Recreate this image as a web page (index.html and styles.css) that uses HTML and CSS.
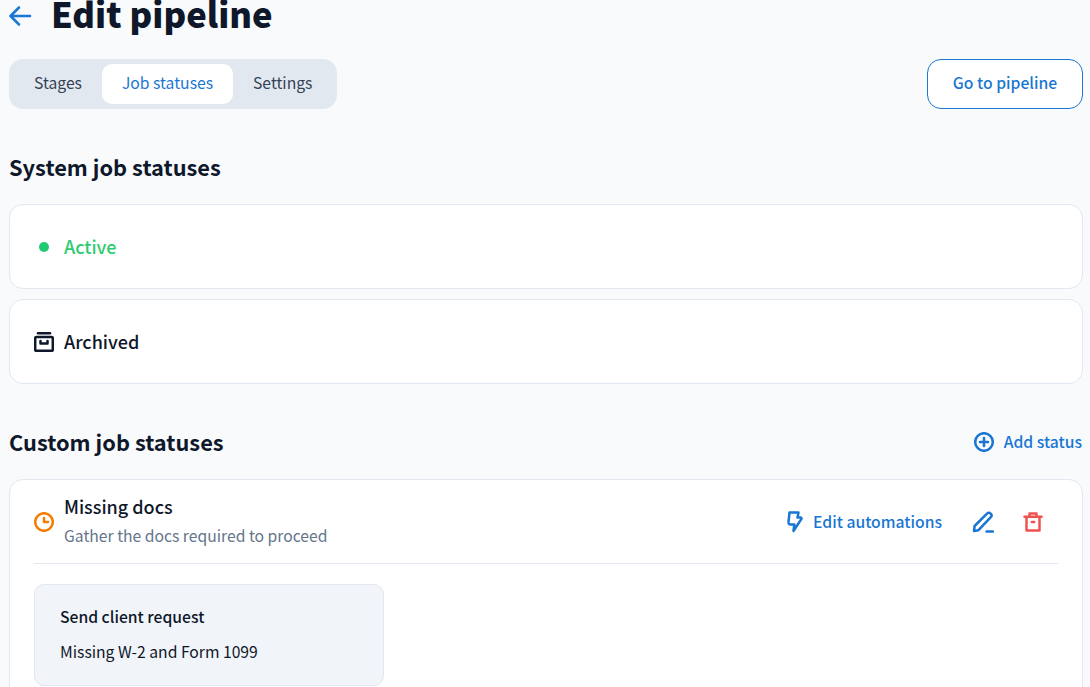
FILE: index.html
```html
<!DOCTYPE html>
<html lang="en">
<head>
    <meta charset="UTF-8">
    <title>Edit pipeline</title>
    <link rel="stylesheet" href="styles.css">
</head>
<body>
    <div class="page">
        <div class="title-row">
            <svg class="back-icon" width="24" height="24" viewBox="0 0 24 24" fill="none" stroke="#1976d2" stroke-width="2.500" stroke-linecap="round" stroke-linejoin="round"><path d="M22 14H3M11 5.500L2.500 14l8.500 8.500" transform="translate(0 -2)"/></svg>
            <h1>Edit pipeline</h1>
        </div>

        <div class="toolbar">
            <div class="tabs">
                <a class="tab">Stages</a>
                <a class="tab active">Job statuses</a>
                <a class="tab">Settings</a>
            </div>
            <a class="btn-outline">Go to pipeline</a>
        </div>

        <h2 class="system-title">System job statuses</h2>

        <div class="card status-row">
            <span class="icon-box"><span class="dot"></span></span>
            <span class="status-name active-name">Active</span>
        </div>
        <div class="card status-row second">
            <span class="icon-box">
                <svg width="20" height="20" viewBox="0 0 20 20" fill="none" stroke="#0f172a" stroke-width="2.500" stroke-linecap="round" stroke-linejoin="round"><path d="M4 1.300h12"/><rect x="1.200" y="5" width="17.600" height="13.800" rx="1"/><path d="M6.500 9v2.500h7V9"/></svg>
            </span>
            <span class="status-name">Archived</span>
        </div>

        <div class="section-head">
            <h2>Custom job statuses</h2>
            <a class="link add-link">
                <svg width="20" height="20" viewBox="0 0 20 20" fill="none" stroke="#1976d2" stroke-width="2.500" stroke-linecap="round"><circle cx="10" cy="10" r="8.800"/><path d="M10 6v8M6 10h8"/></svg>
                Add status
            </a>
        </div>

        <div class="card custom-card">
            <div class="custom-head">
                <span class="icon-box clock-box">
                    <svg width="20" height="20" viewBox="0 0 20 20" fill="none" stroke="#f57c00" stroke-width="2.500" stroke-linecap="round" stroke-linejoin="round"><circle cx="10" cy="10" r="8.800"/><path d="M10 6v4h4"/></svg>
                </span>
                <div class="custom-text">
                    <div class="status-name">Missing docs</div>
                    <div class="status-desc">Gather the docs required to proceed</div>
                </div>
                <div class="custom-actions">
                    <a class="link">
                        <svg width="17" height="22" viewBox="0 0 17 22" fill="none" stroke="#1976d2" stroke-width="2.500" stroke-linecap="round" stroke-linejoin="round"><path d="M3.500 1.500h9l-1 5h3a1 1 0 0 1 .8 1.600L7.500 20l.8-6.500H4.500a2 2 0 0 1-2-2.300z"/></svg>
                        Edit automations
                    </a>
                    <svg class="edit-icon" width="22" height="22" viewBox="0 0 22 22" fill="none" stroke="#1976d2" stroke-width="2.500" stroke-linecap="round" stroke-linejoin="round"><path d="M2 20l.6-5L15 2.700a2.400 2.400 0 0 1 3.800 3.500L6.500 19.200 2 20z"/><path d="M14.500 20.500H21"/></svg>
                    <svg class="trash-icon" width="20" height="20" viewBox="0 0 20 20" fill="none" stroke="#ef5350" stroke-width="2.500" stroke-linecap="round" stroke-linejoin="round"><path d="M1.500 4.800h17M6.500 4.500V1.500h7v3M3.500 4.800V18.500h13V4.800M8.800 10h2.400"/></svg>
                </div>
            </div>
            <div class="request">
                <div class="request-title">Send client request</div>
                <div class="request-text">Missing W-2 and Form 1099</div>
            </div>
        </div>
    </div>
</body>
</html>
```

FILE: styles.css
```css
html, body {
    height: 100%;
    overflow: hidden;
}

body {
    margin: 0;
    background-color: #f8fafc;
    color: #0f172a;
    font-family: "Noto Sans CJK JP", "Open Sans", sans-serif;
}

.page {
    padding: 0 7px 0 9px;
}

a {
    cursor: pointer;
}

.title-row {
    display: flex;
    align-items: center;
    height: 32px;
    margin-bottom: 27px;
}

.back-icon {
    margin-right: 19px;
    margin-left: -1px;
}

h1 {
    margin: -6px 0 0;
    font-size: 34.600px;
    font-weight: 900;
    line-height: 32px;
}

h2 {
    margin: 0;
    font-size: 21.800px;
    font-weight: 700;
    line-height: 32px;
}

.toolbar {
    display: flex;
    justify-content: space-between;
    align-items: center;
}

.tabs {
    display: flex;
    width: 328px;
    height: 50px;
    padding: 5px;
    box-sizing: border-box;
    background-color: #e2e8f0;
    border-radius: 14px;
}

.tab {
    display: flex;
    align-items: center;
    justify-content: center;
    padding: 0 20px 4px;
    font-size: 15.700px;
    white-space: nowrap;
    color: #334155;
    border-radius: 10px;
}

.tab.active {
    background-color: #ffffff;
    color: #1976d2;
}

.btn-outline {
    display: flex;
    align-items: center;
    justify-content: center;
    width: 156px;
    height: 50px;
    padding-bottom: 4px;
    box-sizing: border-box;
    background-color: #ffffff;
    border: 1px solid #1976d2;
    border-radius: 14px;
    color: #1976d2;
    font-size: 15.700px;
    font-weight: 500;
}

.system-title {
    margin: 42px 0 21px;
}

.card {
    background-color: #ffffff;
    border: 1px solid #e2e8f0;
    border-radius: 14px;
    box-sizing: border-box;
}

.status-row {
    display: flex;
    align-items: center;
    height: 85px;
    padding: 0 24px;
}

.status-row.second {
    margin-top: 10px;
}

.status-row .status-name {
    margin-top: -2px;
}

.icon-box {
    display: flex;
    align-items: center;
    justify-content: center;
    flex: none;
    width: 20px;
    height: 20px;
    margin-right: 10px;
}

.clock-box {
    margin-top: 2px;
}

.dot {
    width: 10px;
    height: 10px;
    border-radius: 50%;
    background-color: #22c973;
}

.status-name {
    font-size: 18px;
    font-weight: 500;
    line-height: 28px;
}

.active-name {
    color: #2ecc71;
}

.section-head {
    display: flex;
    justify-content: space-between;
    align-items: center;
    margin: 42px 0 21px;
}

.link {
    display: flex;
    align-items: center;
    gap: 10px;
    color: #1976d2;
    font-size: 15.700px;
    font-weight: 500;
}

.add-link {
    margin-top: -1px;
    margin-right: 1px;
}

.custom-card {
    height: 300px;
    padding: 12px 24px;
}

.custom-head {
    display: flex;
    align-items: center;
    height: 72px;
    padding-bottom: 14px;
    box-sizing: border-box;
    border-bottom: 1px solid #e2e8f0;
}

.status-desc {
    color: #64748b;
    font-size: 15.700px;
    line-height: 30px;
    padding-top: 1px;
    margin-bottom: -1px;
}

.custom-actions {
    display: flex;
    align-items: center;
    margin-top: 2px;
    margin-left: auto;
    padding-right: 15px;
}

.edit-icon {
    margin-left: 30px;
}

.trash-icon {
    margin-left: 29px;
}

.request {
    width: 350px;
    height: 102px;
    margin-top: 20px;
    padding: 20px 25px;
    box-sizing: border-box;
    background-color: #f1f5f9;
    border: 1px solid #e2e8f0;
    border-radius: 10px;
}

.request-title {
    font-size: 15.700px;
    font-weight: 500;
    line-height: 24px;
}

.request-text {
    margin-top: 11px;
    font-size: 15.700px;
    line-height: 24px;
}
```
